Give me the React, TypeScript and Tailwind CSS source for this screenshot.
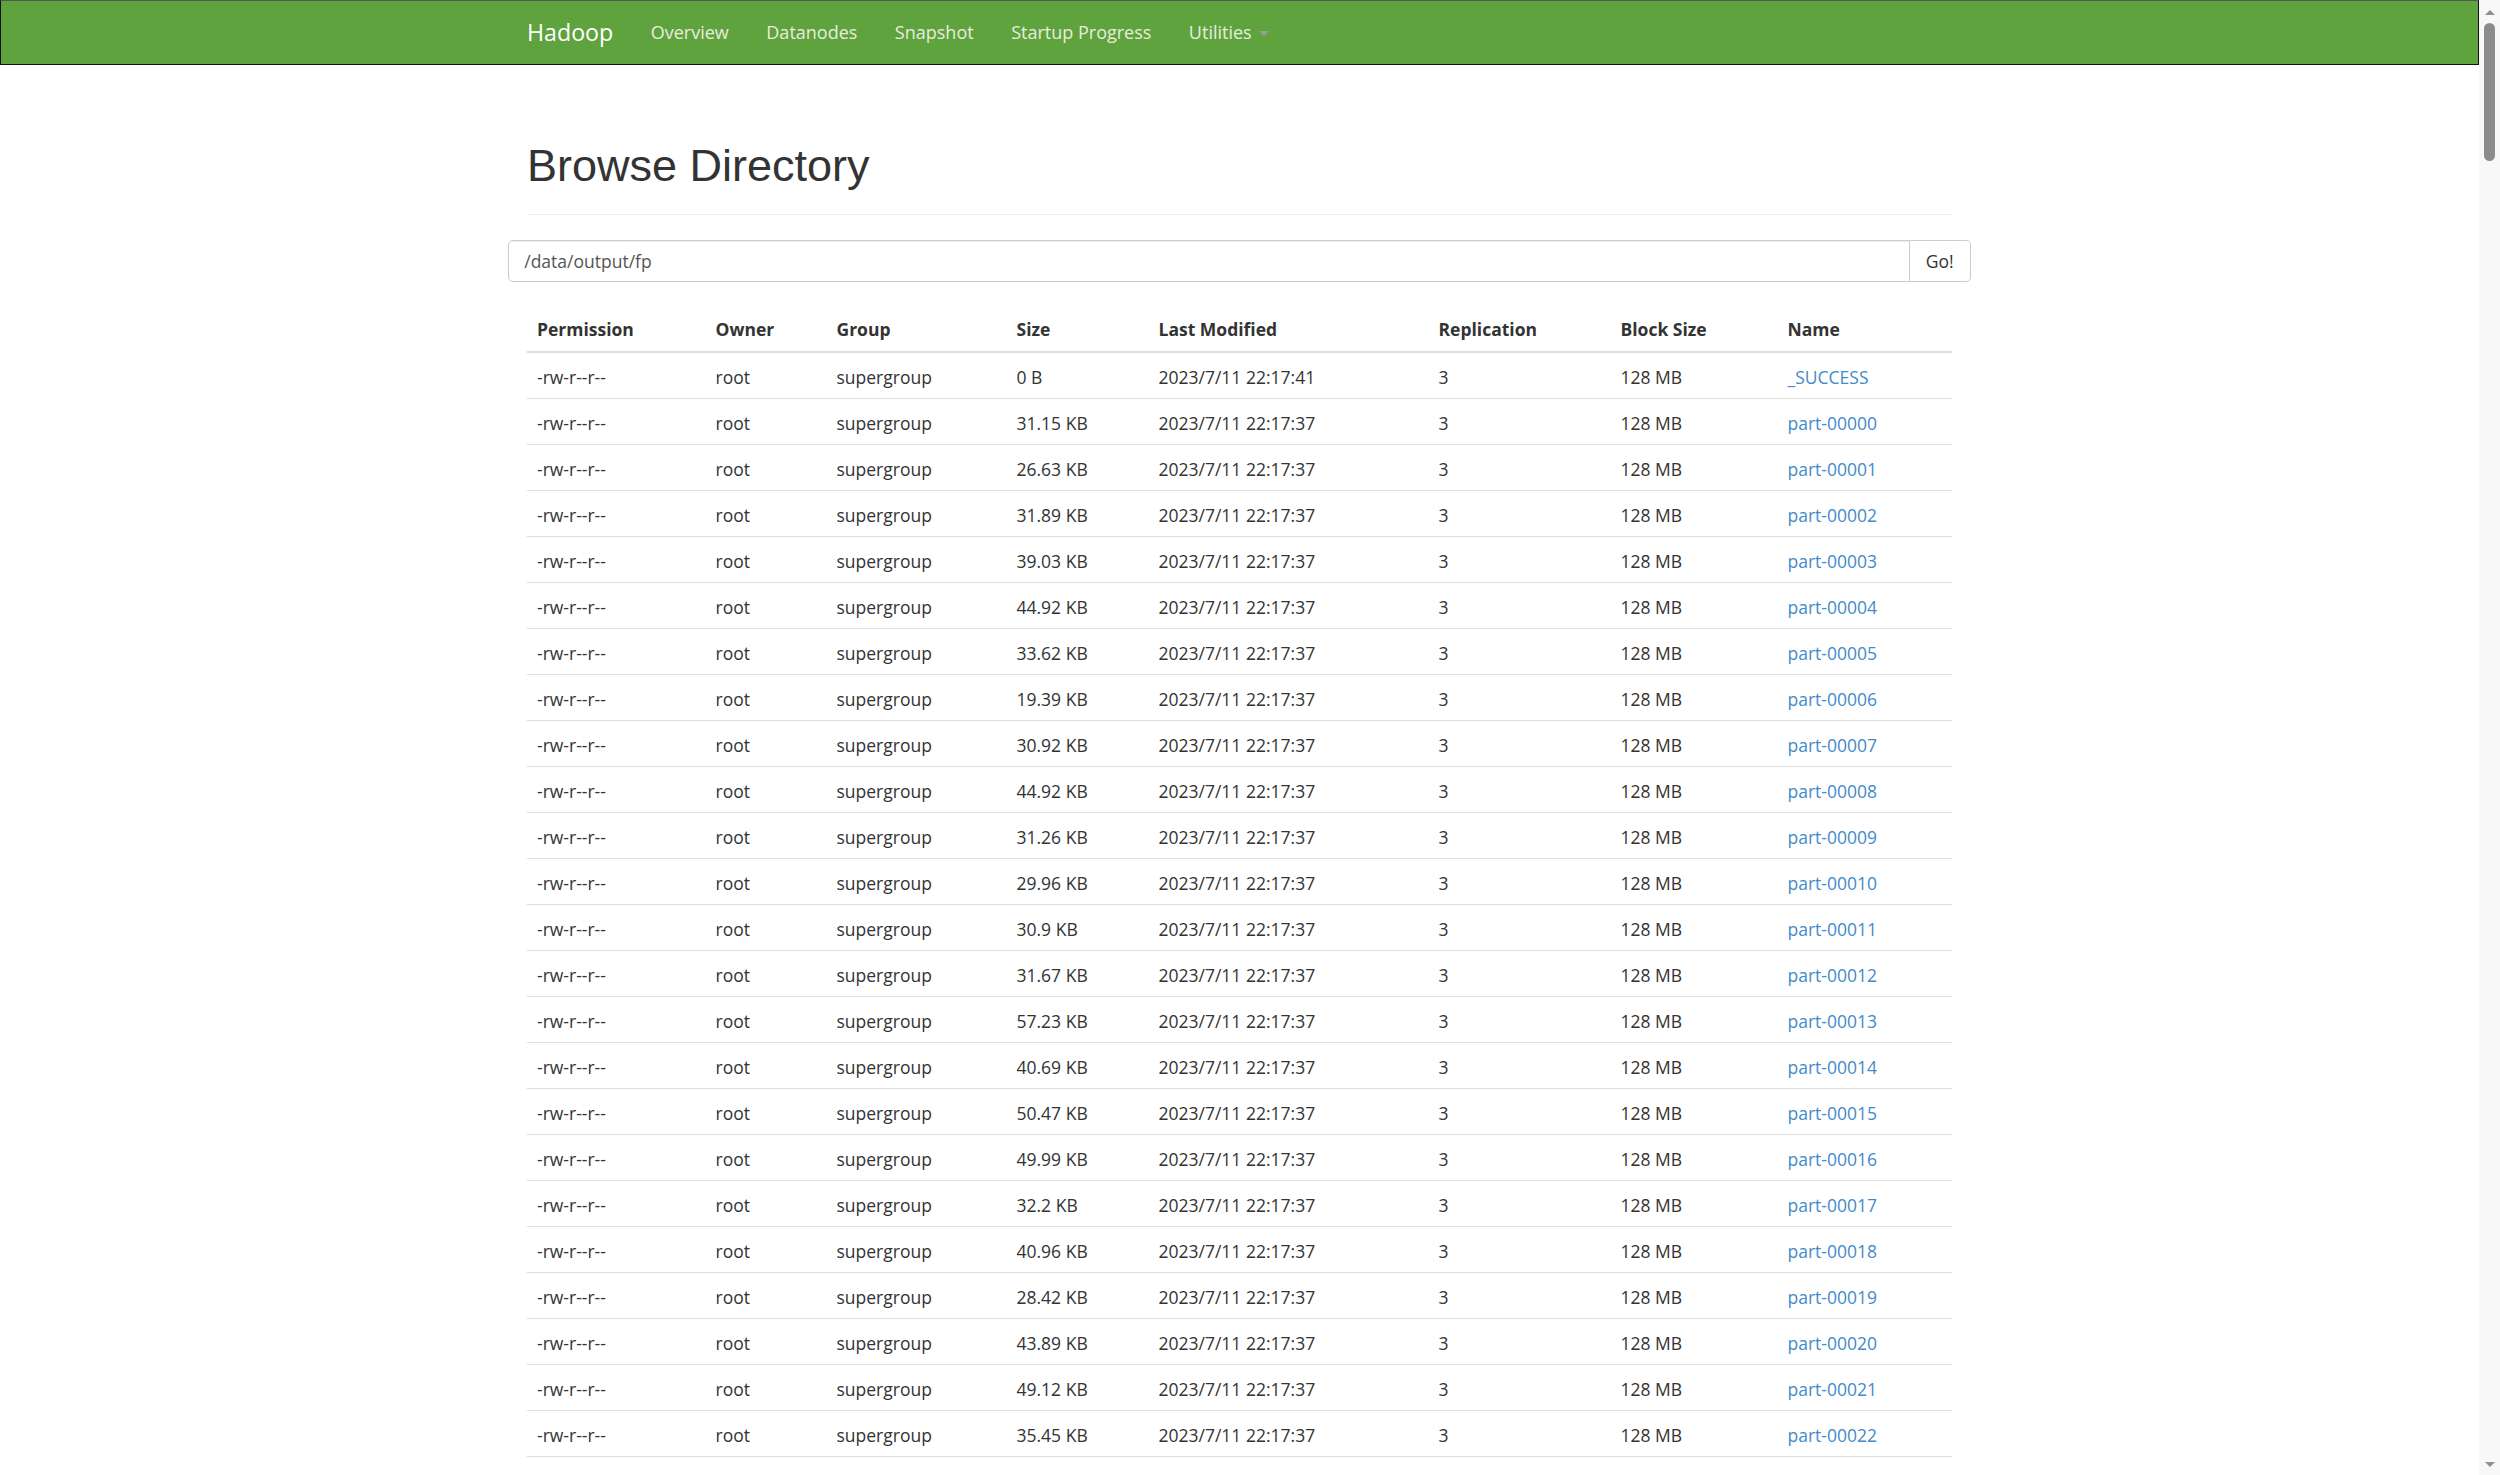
import React from 'react';

const files: [string, string, string][] = [
  ['0 B', '2023/7/11 22:17:41', '_SUCCESS'],
  ['31.15 KB', '2023/7/11 22:17:37', 'part-00000'],
  ['26.63 KB', '2023/7/11 22:17:37', 'part-00001'],
  ['31.89 KB', '2023/7/11 22:17:37', 'part-00002'],
  ['39.03 KB', '2023/7/11 22:17:37', 'part-00003'],
  ['44.92 KB', '2023/7/11 22:17:37', 'part-00004'],
  ['33.62 KB', '2023/7/11 22:17:37', 'part-00005'],
  ['19.39 KB', '2023/7/11 22:17:37', 'part-00006'],
  ['30.92 KB', '2023/7/11 22:17:37', 'part-00007'],
  ['44.92 KB', '2023/7/11 22:17:37', 'part-00008'],
  ['31.26 KB', '2023/7/11 22:17:37', 'part-00009'],
  ['29.96 KB', '2023/7/11 22:17:37', 'part-00010'],
  ['30.9 KB', '2023/7/11 22:17:37', 'part-00011'],
  ['31.67 KB', '2023/7/11 22:17:37', 'part-00012'],
  ['57.23 KB', '2023/7/11 22:17:37', 'part-00013'],
  ['40.69 KB', '2023/7/11 22:17:37', 'part-00014'],
  ['50.47 KB', '2023/7/11 22:17:37', 'part-00015'],
  ['49.99 KB', '2023/7/11 22:17:37', 'part-00016'],
  ['32.2 KB', '2023/7/11 22:17:37', 'part-00017'],
  ['40.96 KB', '2023/7/11 22:17:37', 'part-00018'],
  ['28.42 KB', '2023/7/11 22:17:37', 'part-00019'],
  ['43.89 KB', '2023/7/11 22:17:37', 'part-00020'],
  ['49.12 KB', '2023/7/11 22:17:37', 'part-00021'],
  ['35.45 KB', '2023/7/11 22:17:37', 'part-00022'],
  ['47.71 KB', '2023/7/11 22:17:37', 'part-00023'],
];

const cols = 'grid grid-cols-[178.5px_121px_180px_142px_280px_182px_167px_174.5px]';

const Navbar: React.FC = () => (
  <div className="h-[65px] shrink-0 bg-[#5fa33e] border border-[#111] border-t-[#555]">
    <div className="w-[1462.5px] mx-auto h-full flex items-center">
      <span className="px-[18.75px] text-[23.2px] text-white">Hadoop</span>
      {['Overview', 'Datanodes', 'Snapshot', 'Startup Progress'].map((l) => (
        <span key={l} className="px-[18.75px] text-[18px] text-[#e9ecdf]">{l}</span>
      ))}
      <span className="px-[18.75px] text-[18px] text-[#e9ecdf] flex items-center">
        Utilities
        <span className="ml-[7px] mt-[2px] w-0 h-0 border-l-[5px] border-r-[5px] border-t-[5px] border-l-transparent border-r-transparent border-t-[#9a9a9a]" />
      </span>
    </div>
  </div>
);

const Scrollbar: React.FC = () => (
  <div className="w-[21px] shrink-0 h-full bg-[#f8f8f8] flex flex-col items-center">
    <div className="mt-[10px] w-0 h-0 border-l-[5px] border-r-[5px] border-b-[5px] border-l-transparent border-r-transparent border-b-[#8f8f8f]" />
    <div className="mt-[8px] w-[11px] h-[138px] rounded-full bg-[#8c8c8c]" />
    <div className="flex-1" />
    <div className="mb-[8px] w-0 h-0 border-l-[5px] border-r-[5px] border-t-[5px] border-l-transparent border-r-transparent border-t-[#8f8f8f]" />
  </div>
);

export default function App() {
  return (
    <div className="h-[1475px] w-full overflow-hidden flex bg-white text-[#333] font-['Open_Sans',sans-serif]">
      <div className="flex-1 min-w-0 h-full overflow-hidden flex flex-col">
        <Navbar />
        <div className="w-[1462.5px] mx-auto">
          <div className="px-[18.75px]">
            <h1 className="mt-[76px] pb-[23.5px] border-b border-[#eee] text-[45px] leading-[1.1] font-['Liberation_Sans',Arial,sans-serif] text-[#333]">
              Browse Directory
            </h1>
          </div>

          <div className="mt-[25px] flex h-[42px]">
            <div className="flex-1 border border-[#ccc] rounded-l-[5px] shadow-[inset_0_1px_1px_rgba(0,0,0,0.075)] flex items-center px-[15px] text-[17.5px] text-[#555]">
              /data/output/fp
            </div>
            <div className="w-[61px] border border-l-0 border-[#ccc] rounded-r-[5px] flex items-center justify-center text-[17.5px] text-[#333] bg-white">
              Go!
            </div>
          </div>

          <div className="px-[18.75px] mt-[25px] text-[17.5px]">
            <div className={`${cols} h-[46px] border-b-2 border-[#ddd] font-bold items-center`}>
              {['Permission', 'Owner', 'Group', 'Size', 'Last Modified', 'Replication', 'Block Size', 'Name'].map((h) => (
                <div key={h} className="pl-[10px] whitespace-nowrap">{h}</div>
              ))}
            </div>
            {files.map(([size, date, name]) => (
              <div key={name} className={`${cols} h-[46px] border-b border-[#ddd] items-center whitespace-nowrap`}>
                <div className="pl-[10px] pt-[3px]">-rw-r--r--</div>
                <div className="pl-[10px] pt-[3px]">root</div>
                <div className="pl-[10px] pt-[3px]">supergroup</div>
                <div className="pl-[10px] pt-[3px]">{size}</div>
                <div className="pl-[10px] pt-[3px]">{date}</div>
                <div className="pl-[10px] pt-[3px]">3</div>
                <div className="pl-[10px] pt-[3px]">128 MB</div>
                <div className="pl-[10px] pt-[3px] text-[#428bca]">{name}</div>
              </div>
            ))}
          </div>
        </div>
      </div>
      <Scrollbar />
    </div>
  );
}
